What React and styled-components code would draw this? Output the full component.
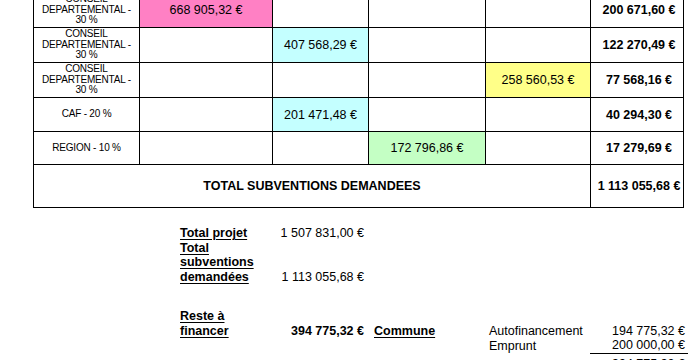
import React from 'react';
import styled, {createGlobalStyle} from 'styled-components';

const GlobalStyle = createGlobalStyle`
  html, body {
    margin: 0;
    padding: 0;
    background: #fff;
    overflow: hidden;
  }
  body {
    font-family: "Liberation Sans", Arial, sans-serif;
    color: #000;
  }
`;

const tones = {
  pink: '#ff80c4',
  cyan: '#c4ffff',
  yellow: '#ffff88',
  green: '#c4ffc4',
  none: '#fff'
};

const Page = styled.div`
  margin-top: -8px;
  padding-left: 33px;
`;

// grid with black background + 1px gaps gives the cell borders
const Table = styled.div`
  display: grid;
  width: max-content;
  grid-template-columns: 105px 132px 95px 116px 104px 92px;
  grid-template-rows: 34px 34px 34px 33px 32px 42px;
  gap: 1px;
  padding: 1px;
  background: #000;
`;

const Cell = styled.div`
  grid-column: span ${p => p.$span || 1};
  background: ${p => tones[p.$tone || 'none']};
  display: flex;
  align-items: center;
  justify-content: center;
  text-align: center;
  font-size: 12.5px;
  font-weight: ${p => (p.$bold ? 700 : 400)};
  padding-left: ${p => (p.$shift ? '4px' : '0')};
  white-space: nowrap;
`;

const Label = styled(Cell)`
  font-size: 10px;
  letter-spacing: -0.2px;
  line-height: 10.6px;
  padding: 0 4px;
  white-space: normal;
`;

const Summary = styled.div`
  display: grid;
  grid-template-columns: 90px 94px 125px 101px 98px;
  margin: 18px 0 0 147px;
  font-size: 12.5px;
  line-height: 14.5px;
`;

const Heading = styled.div`
  font-weight: 700;
  text-decoration: underline;
  text-underline-offset: 1.5px;
  padding-left: ${p => (p.$indent ? '10px' : '0')};
  align-self: end;
`;

const Amount = styled.div`
  text-align: right;
  align-self: end;
  font-weight: ${p => (p.$bold ? 700 : 400)};
  padding-right: ${p => (p.$edge ? '3px' : '0')};
  padding-top: ${p => (p.$top ? '3px' : '0')};
  border-bottom: ${p => (p.$rule ? '1px solid #000' : 'none')};
  grid-column: ${p => p.$col || 'auto'};
`;

const Text = styled.div`
  align-self: end;
  grid-column: ${p => p.$col || 'auto'};
`;

const Spacer = styled.div`
  grid-column: 1 / -1;
  height: 25px;
`;

const rows = [
  {label: 'CONSEIL DEPARTEMENTAL - 30 %', col: 0, value: '668 905,32 €', tone: 'pink', total: '200 671,60 €'},
  {label: 'CONSEIL DEPARTEMENTAL - 30 %', col: 1, value: '407 568,29 €', tone: 'cyan', total: '122 270,49 €'},
  {label: 'CONSEIL DEPARTEMENTAL - 30 %', col: 3, value: '258 560,53 €', tone: 'yellow', total: '77 568,16 €'},
  {label: 'CAF - 20 %', col: 1, value: '201 471,48 €', tone: 'cyan', total: '40 294,30 €'},
  {label: 'REGION - 10 %', col: 2, value: '172 796,86 €', tone: 'green', total: '17 279,69 €'}
];

export default function App() {
  return (
    <Page>
      <GlobalStyle />
      <Table>
        {rows.map((r, i) => (
          <React.Fragment key={i}>
            <Label>{r.label}</Label>
            {[0, 1, 2, 3].map(c => (
              <Cell key={c} $tone={c === r.col ? r.tone : 'none'}>
                {c === r.col ? r.value : ''}
              </Cell>
            ))}
            <Cell $bold $shift>{r.total}</Cell>
          </React.Fragment>
        ))}
        <Cell $span={5} $bold>TOTAL SUBVENTIONS DEMANDEES</Cell>
        <Cell $bold $shift>1 113 055,68 €</Cell>
      </Table>

      <Summary>
        <Heading>Total projet</Heading>
        <Amount>1 507 831,00 €</Amount>
        <Text $col="3 / -1" />

        <Heading>Total subventions demandées</Heading>
        <Amount>1 113 055,68 €</Amount>
        <Text $col="3 / -1" />

        <Spacer />

        <Heading>Reste à financer</Heading>
        <Amount $bold>394 775,32 €</Amount>
        <Heading $indent>Commune</Heading>
        <Text>Autofinancement</Text>
        <Amount $edge>194 775,32 €</Amount>

        <Text $col="4">Emprunt</Text>
        <Amount $edge $rule>200 000,00 €</Amount>

        <Amount $edge $top $col="5">394 775,32 €</Amount>
      </Summary>
    </Page>
  );
}
